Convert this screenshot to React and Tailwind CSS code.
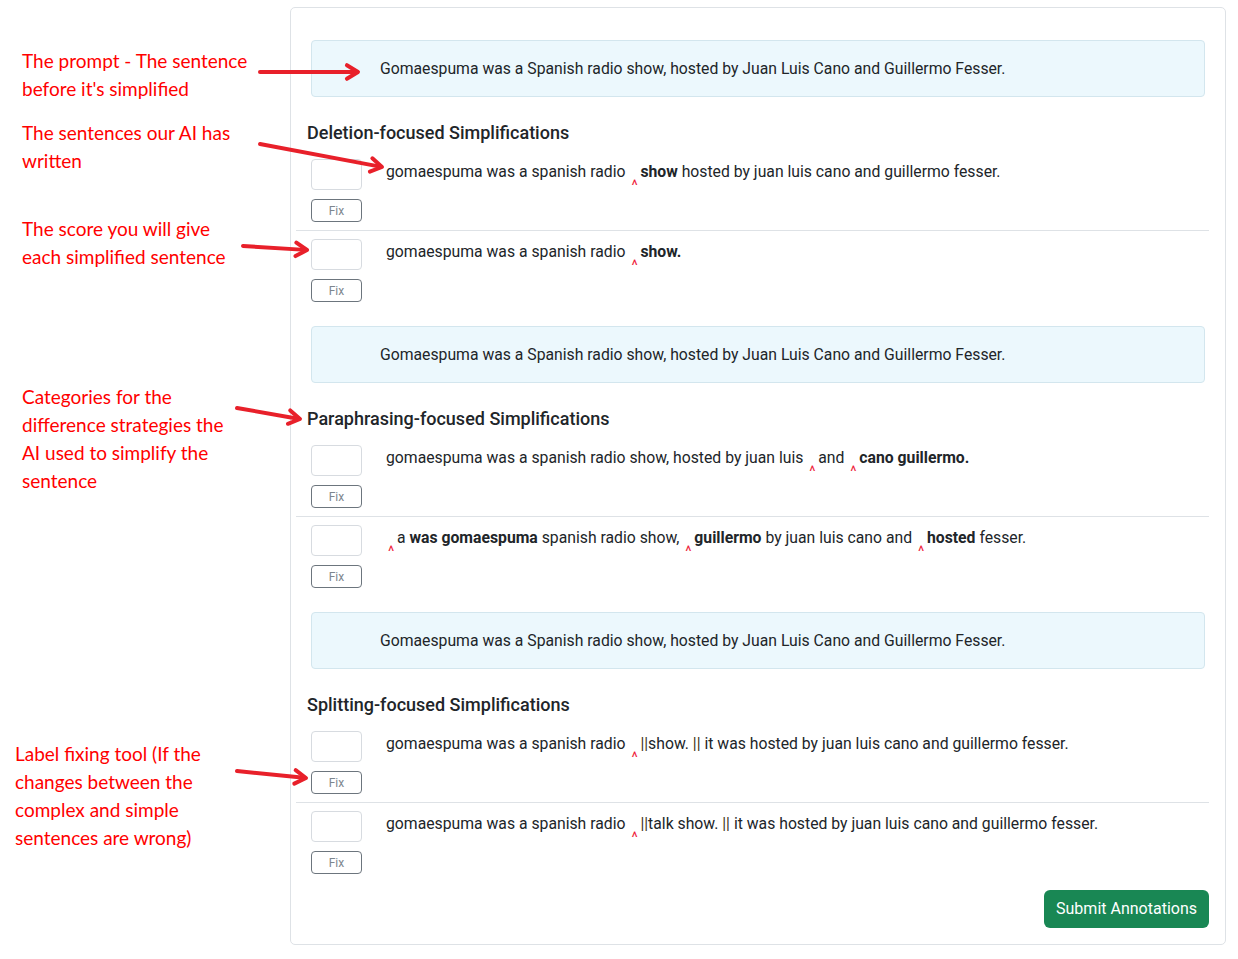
import React from "react";

const C = () => (
  <span className="inline-block w-[11px] relative top-[13px] pl-[2px] text-[15px] leading-none text-[#ee1c3b]">^</span>
);
const P = () => <span className="text-[#3d3320]">||</span>;

function Row({ children, last }) {
  return (
    <div className={"flex pt-[8px] pb-[8px] " + (last ? "" : "border-b border-[#dee2e6]")}>
      <div className="ml-[15px] w-[51px] flex flex-col gap-[9px] shrink-0">
        <div className="h-[31px] border border-[#d7dbe0] rounded-[4px] bg-white"></div>
        <button className="h-[23px] border border-[#6c757d] rounded-[4px] text-[12px] leading-none text-[#7d868e] bg-white">Fix</button>
      </div>
      <div className="ml-[24px] mt-[1px] text-[15.75px] leading-[24px] text-[#212529]">{children}</div>
    </div>
  );
}

function Prompt({ className }) {
  return (
    <div className={"ml-[15px] mr-[4px] h-[57px] flex items-center pl-[68px] pt-[1px] bg-[#ecf8fd] border border-[#d3e6ee] rounded-[4px] text-[15.75px] text-[#212529] " + className}>
      Gomaespuma was a Spanish radio show, hosted by Juan Luis Cano and Guillermo Fesser.
    </div>
  );
}

function Heading({ children }) {
  return (
    <div className="mt-[25px] mb-[7px] ml-[11px] h-[22px] text-[18px] leading-[22px] font-medium text-[#212529]">{children}</div>
  );
}

function Arrow({ x1, y1, x2, y2 }) {
  const dx = x2 - x1, dy = y2 - y1;
  const len = Math.hypot(dx, dy);
  const ux = dx / len, uy = dy / len;
  const L = 13, a = 0.55;
  const ca = Math.cos(a), sa = Math.sin(a);
  const b1x = x2 - L * (ux * ca - uy * sa), b1y = y2 - L * (uy * ca + ux * sa);
  const b2x = x2 - L * (ux * ca + uy * sa), b2y = y2 - L * (uy * ca - ux * sa);
  return (
    <g stroke="#e8202a" strokeWidth="4" strokeLinecap="round" strokeLinejoin="round" fill="none">
      <line x1={x1} y1={y1} x2={x2 - ux * 2} y2={y2 - uy * 2} />
      <polyline points={`${b1x},${b1y} ${x2},${y2} ${b2x},${b2y}`} />
    </g>
  );
}

export default function App() {
  return (
    <div className="relative w-[1238px] h-[959px] bg-white overflow-hidden" style={{ fontFamily: "Roboto, 'Liberation Sans', sans-serif" }}>
      <div className="flex">
        <div className="w-[290px] shrink-0 text-[#ff0000] text-[19px] leading-[28px]" style={{ fontFamily: "Lato, 'Noto Sans', sans-serif" }}>
          <div className="mt-[47px] pl-[22px]">The prompt - The sentence<br />before it's simplified</div>
          <div className="mt-[16px] pl-[22px]">The sentences our AI has<br />written</div>
          <div className="mt-[40px] pl-[22px]">The score you will give<br />each simplified sentence</div>
          <div className="mt-[112px] pl-[22px]">Categories for the<br />difference strategies the<br />AI used to simplify the<br />sentence</div>
          <div className="mt-[245px] pl-[15px]">Label fixing tool (If the<br />changes between the<br />complex and simple<br />sentences are wrong)</div>
        </div>
        <div className="mt-[7px] w-[936px] border border-[#dee2e6] rounded-[5px] pl-[5px] pr-[16px] pb-[16px] flex flex-col">
          <Prompt className="mt-[32px]" />
          <Heading>Deletion-focused Simplifications</Heading>
          <Row>gomaespuma was a spanish radio <C /><b>show</b> hosted by juan luis cano and guillermo fesser.</Row>
          <Row last>gomaespuma was a spanish radio <C /><b>show.</b></Row>

          <Prompt className="mt-[16px]" />
          <Heading>Paraphrasing-focused Simplifications</Heading>
          <Row>gomaespuma was a spanish radio show, hosted by juan luis <C />and <C /><b>cano guillermo.</b></Row>
          <Row last><C />a <b>was gomaespuma</b> spanish radio show, <C /><b>guillermo</b> by juan luis cano and <C /><b>hosted</b> fesser.</Row>

          <Prompt className="mt-[16px]" />
          <Heading>Splitting-focused Simplifications</Heading>
          <Row>gomaespuma was a spanish radio <C /><P />show. <P /> it was hosted by juan luis cano and guillermo fesser.</Row>
          <Row last>gomaespuma was a spanish radio <C /><P />talk show. <P /> it was hosted by juan luis cano and guillermo fesser.</Row>

          <div className="flex justify-end mt-[8px]">
            <button className="h-[38px] px-[12px] bg-[#198754] text-white text-[16px] rounded-[6px]">Submit Annotations</button>
          </div>
        </div>
      </div>
      <svg className="absolute left-0 top-0 pointer-events-none" width="1238" height="959">
        <Arrow x1={260} y1={72} x2={358} y2={72} />
        <Arrow x1={260} y1={144} x2={382} y2={167} />
        <Arrow x1={243} y1={246} x2={307} y2={250} />
        <Arrow x1={237} y1={408} x2={300} y2={419} />
        <Arrow x1={237} y1={771} x2={306} y2={778} />
      </svg>
    </div>
  );
}
